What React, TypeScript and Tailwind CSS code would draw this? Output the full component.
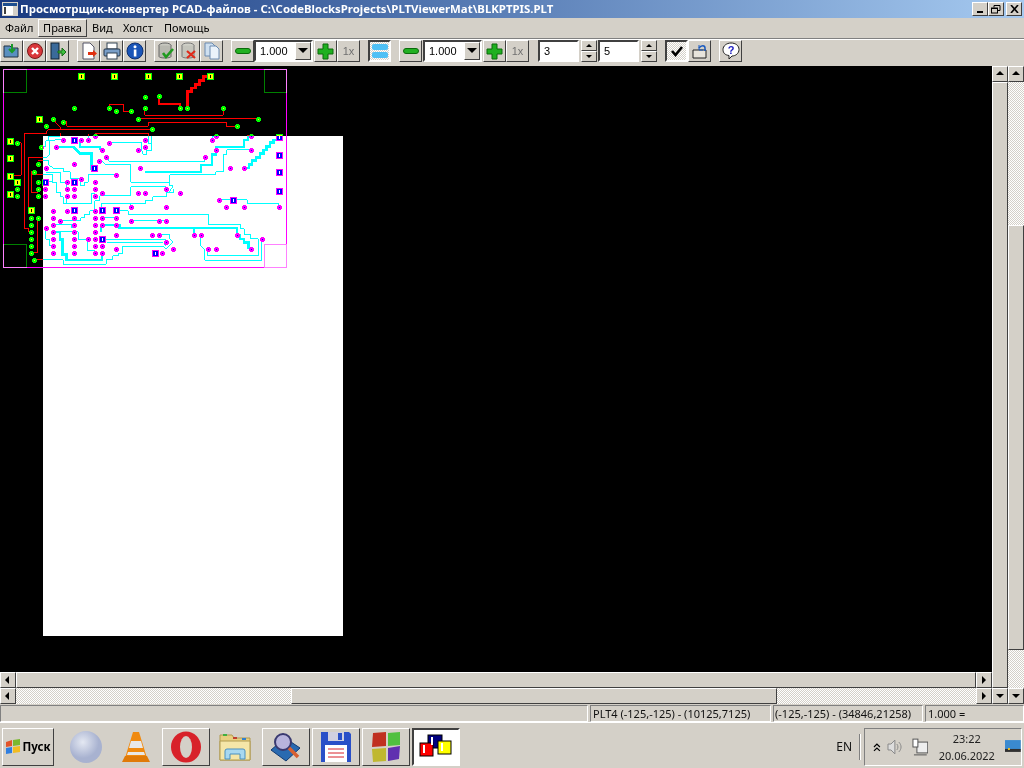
import type { ReactNode } from 'react'

const raised = 'border border-t-white border-l-white border-r-[#404040] border-b-[#404040]'
const sunken = 'border border-t-[#808080] border-l-[#808080] border-r-white border-b-white'
const deep = 'border-2 border-t-[#404040] border-l-[#404040] border-r-white border-b-white'
const dither = 'bg-[conic-gradient(#ffffff_25%,#d4d0c8_0_50%,#ffffff_0_75%,#d4d0c8_0)] bg-[length:2px_2px]'
const digits = "font-['Liberation_Sans',sans-serif]"

// pcb coordinates are 3x screen px, measured from the board's top left zoom
const thin = [
  'M328 126V115H370V136H393', 'M435 126V148H670V126', 'M414 159H774',
  'M159 159H168V171L181 183V190', 'M189 168H201V181H445V169H679V181H711', 'M456 190H147L141 196V202H73V487H87V497H93',
  'M285 202H445V232H456V210', 'M51 231H64V328H33', 'M85 434V274H141L148 265V225H159L165 222H189', 'M95 434H85',
  'M104 318H94V381H114', 'M114 456V561H93', 'M181 202V211H147V225H138V242H125', 'M265 204V226',
  'M327 231H425V253L430 266H440V253H456V210', 'M318 273L330 287H615V272', 'M297 284H305L318 297H393V349H510V360H520L510 375V381H498',
  'M114 285H147V297L160 307H190V318H211V339H243', 'M138 319H183V350H201V369', 'M96 327H159V350H170V380H183V393H190V412H201',
  'M201 390V412H276V382H285', 'M243 339V360H255V349H265V327H348', 'M138 348H159', 'M285 435V404H300V390H393V362H498V369',
  'M306 435V412H393', 'M393 423V412H438V403H458V392H500V381H520V369', 'M180 465H243V456H255V445H270V435H285',
  'M159 477H215V486H225', 'M306 456H348', 'M306 477H348', 'M222 498H235V520H262V555H285V561', 'M138 486V520H150V540H165',
  'M159 498H222', 'M307 520H498', 'M320 530H490L498 540', 'M477 507H510V520L520 528L498 550L490 541H369V562H357V570H339V582H319V595H190V582H104',
  'M510 349V327H648V318H670V265H680V252H753', 'M637 222V213H648', 'M657 402H742V412H837V423',
  'M350 434H385V445H625V477H723V488H733V507H753V519H775V570H624V549', 'M393 465H498', 'M603 507V541L615 553V583H786V519',
]
const thick = [
  'M628 31H610V44H598V56H586V66H574V76H562V125', 'M477 92V114H540V125', 'M168 243H220L240 262H274V308H283',
  'M240 222V243H300V252', 'M435 318H603V297H636V265H648V243H732V222H744V210H753',
  'M738 306H747V295H756V284H768V274H780V262H790V252H800V241H810V230H820V222H838',
  'M303 498V477H358V486H711V507H720V519H732V530H745V549', 'M582 486V507', 'M159 498H180V520H187V565H199V582H306V561',
]
const vias = [
  [222,126],[327,126],[348,135],[393,135],[435,93],[477,92],[435,126],[540,126],[561,126],[669,126],[414,159],[774,159],
  [159,159],[189,168],[138,180],[456,189],[711,181],[51,231],[51,369],[51,390],[114,294],[104,318],[114,348],[114,369],
  [114,390],[93,456],[114,456],[93,477],[93,498],[93,519],[93,540],[93,561],[104,582],[285,210],[189,222],[243,222],
  [265,222],[435,222],[327,231],[435,243],[125,243],[168,243],[306,252],[414,252],[318,273],[297,285],[222,294],[138,306],
  [420,306],[348,327],[243,339],[201,348],[285,348],[135,369],[201,369],[222,369],[285,369],[135,390],[201,390],[222,390],
  [285,390],[306,381],[414,381],[435,381],[498,369],[540,381],[393,423],[498,423],[159,435],[201,435],[285,435],[159,456],
  [222,456],[285,456],[306,456],[348,456],[180,465],[393,465],[477,465],[498,465],[159,477],[222,477],[285,477],[306,477],
  [348,477],[138,486],[159,498],[222,498],[285,498],[348,507],[456,507],[477,507],[159,519],[222,519],[264,519],[285,519],
  [498,528],[159,540],[222,540],[285,540],[306,540],[348,549],[519,549],[159,561],[222,561],[285,561],[306,561],[486,561],
  [582,507],[603,507],[711,507],[786,519],[624,549],[648,549],[753,549],[657,402],[678,423],[732,423],[837,423],[690,306],
  [732,306],[615,273],[648,252],[753,252],[636,222],[648,210],[753,210],
]
const pads = [
  [244,31],[342,31],[444,31],[538,31],[631,31],[117,159],[31,225],[31,277],[31,331],[52,349],[31,384],[95,434],
  [223,223],[283,307],[136,349],[223,349],[223,434],[307,434],[350,434],[307,520],[466,562],[700,403],[838,214],[838,268],[838,319],[838,376],
]

const snap = (v: number) => Math.round(v / 3) * 3

function Board() {
  return (
    <svg width="992" height="606" viewBox="0 0 992 606" className="block" shapeRendering="crispEdges">
      <rect x="43" y="70" width="300" height="500" fill="#fff" />
      <g transform="scale(0.33333)">
        <path d="M10 605V10H860V535" fill="none" stroke="#ff00ff" strokeWidth="3" />
        <path d="M10 605H793" fill="none" stroke="#ff00ff" strokeWidth="3" />
        <g className="mix-blend-difference">
          <g fill="none" stroke="#008000" strokeWidth="3">
            <rect x="10" y="10" width="70" height="70" />
            <rect x="793" y="10" width="67" height="70" />
            <rect x="10" y="535" width="70" height="70" />
          </g>
          <g fill="none" stroke="#ff0000" strokeWidth="3">
            {thin.map((d) => <path key={d} d={d} />)}
          </g>
          <g fill="none" stroke="#ff0000" strokeWidth="8">
            {thick.map((d) => <path key={d} d={d} />)}
          </g>
          {vias.map(([x, y]) => {
            const cx = snap(x - 1.5)
            const cy = snap(y - 1.5)
            return (
              <g key={`${x}-${y}`}>
                <rect x={cx - 6} y={cy - 3} width="15" height="9" fill="#00ff00" />
                <rect x={cx - 3} y={cy - 6} width="9" height="15" fill="#00ff00" />
                <rect x={cx} y={cy} width="3" height="3" fill="#ffff00" />
              </g>
            )
          })}
          {pads.map(([x, y]) => {
            const px = snap(x - 10.5)
            const py = snap(y - 10.5)
            return (
              <g key={`${x}-${y}`}>
                <rect x={px} y={py} width="21" height="21" fill="#00ff00" />
                <rect x={px + 3} y={py + 3} width="15" height="15" fill="#ffff00" />
                <rect x={px + 9} y={py + 6} width="3" height="9" fill="#000000" />
              </g>
            )
          })}
        </g>
        <rect x="793" y="535" width="67" height="70" fill="none" stroke="#ff80ff" strokeWidth="3" />
      </g>
    </svg>
  )
}

function Btn({ children, className = '', on = false }: { children?: ReactNode; className?: string; on?: boolean }) {
  return (
    <div className={`flex h-[22px] w-[23px] shrink-0 items-center justify-center ${on ? `${deep} ${dither}` : raised} ${className}`}>
      {children}
    </div>
  )
}

function Ico({ children }: { children: ReactNode }) {
  return <svg width="18" height="18" viewBox="0 0 18 18">{children}</svg>
}

function Tri({ dir }: { dir: 'up' | 'down' | 'left' | 'right' }) {
  const pts = { up: '1,6 5,2 9,6', down: '1,3 9,3 5,7', left: '6,1 6,9 2,5', right: '3,1 3,9 7,5' }[dir]
  return <svg width="10" height="10" viewBox="0 0 10 10"><polygon points={pts} fill="#000" /></svg>
}

function Arrow({ dir, className = '' }: { dir: 'up' | 'down' | 'left' | 'right'; className?: string }) {
  return (
    <div className={`flex h-4 w-4 shrink-0 items-center justify-center bg-[#d4d0c8] ${raised} ${className}`}>
      <Tri dir={dir} />
    </div>
  )
}

function Minus() {
  return <Btn><div className="h-[6px] w-[16px] rounded-[3px] border border-[#0a6a0a] bg-[#22b022]" /></Btn>
}

function Plus() {
  return (
    <Btn>
      <svg width="17" height="17" viewBox="0 0 17 17">
        <path d="M6 1h5v5h5v5h-5v5H6v-5H1V6h5z" fill="#1fb01f" stroke="#0a6a0a" />
      </svg>
    </Btn>
  )
}

function OneX() {
  return <Btn className={`text-[11px] text-[#707070] ${digits}`}>1x</Btn>
}

function Combo() {
  return (
    <div className={`flex h-[22px] w-[59px] shrink-0 items-center bg-white pl-[4px] text-[11px] text-black ${deep} ${digits}`}>
      <span className="flex-1">1.000</span>
      <div className={`flex h-[18px] w-[16px] items-center justify-center bg-[#d4d0c8] ${raised}`}>
        <svg width="10" height="6" viewBox="0 0 10 6"><polygon points="0,0 10,0 5,5" fill="#000" /></svg>
      </div>
    </div>
  )
}

function Spin({ value, width }: { value: string; width: string }) {
  return (
    <>
      <div className={`flex h-[22px] shrink-0 items-center bg-white pl-[4px] text-[11px] text-black ${width} ${deep} ${digits}`}>{value}</div>
      <div className="ml-[2px] flex h-[22px] w-[16px] shrink-0 flex-col">
        <div className={`flex h-[11px] items-center justify-center ${raised}`}>
          <svg width="6" height="4" viewBox="0 0 6 4"><polygon points="0,3 6,3 3,0" fill="#000" /></svg>
        </div>
        <div className={`flex h-[11px] items-center justify-center ${raised}`}>
          <svg width="6" height="4" viewBox="0 0 6 4"><polygon points="0,0 6,0 3,3" fill="#000" /></svg>
        </div>
      </div>
    </>
  )
}

function TaskIcon({ children, boxed = false, className = '' }: { children: ReactNode; boxed?: boolean; className?: string }) {
  return (
    <div className={`flex h-[38px] w-[48px] shrink-0 items-center justify-center ${boxed ? raised : ''} ${className}`}>
      {children}
    </div>
  )
}

export default function App() {
  return (
    <div className="flex h-[768px] w-[1024px] flex-col overflow-hidden bg-[#d4d0c8] font-['Noto_Sans',sans-serif] text-black">
      <div className="flex h-[18px] shrink-0 items-center bg-gradient-to-r from-[#1a3a80] to-[#a6caf0] pl-[2px] pr-[2px]">
        <svg width="16" height="14" viewBox="0 0 16 14">
          <rect width="16" height="14" fill="#d4d0c8" />
          <rect x="1" y="1" width="14" height="3" fill="#1f4f8f" />
          <rect x="1" y="4" width="10" height="9" fill="#fff" />
          <rect x="2" y="5" width="2" height="7" fill="#404040" />
        </svg>
        <span className="ml-[2px] flex-1 whitespace-nowrap text-[11.4px] leading-none font-bold text-white">
          Просмотрщик-конвертер PCAD-файлов - C:\CodeBlocksProjects\PLTViewerMat\BLKPTPIS.PLT
        </span>
        <div className={`flex h-[14px] w-4 items-end justify-center bg-[#d4d0c8] pb-[2px] ${raised}`}>
          <div className="h-[2px] w-[6px] bg-black" />
        </div>
        <div className={`flex h-[14px] w-4 items-center justify-center bg-[#d4d0c8] ${raised}`}>
          <svg width="10" height="9" viewBox="0 0 10 9" fill="none" stroke="#000">
            <path d="M3 2.5V.5h6v5H7" /><rect x=".5" y="3" width="6" height="5" /><path d="M1 3.5h5" />
          </svg>
        </div>
        <div className={`ml-[2px] flex h-[14px] w-4 items-center justify-center bg-[#d4d0c8] ${raised}`}>
          <svg width="9" height="8" viewBox="0 0 9 8" stroke="#000" strokeWidth="1.6"><path d="M1 0l7 8M8 0L1 8" /></svg>
        </div>
      </div>

      <div className="flex h-[20px] shrink-0 items-center pl-[5px] text-[11px]">
        <span className="w-[27px]">Файл</span>
        <span className={`ml-[6px] flex h-[18px] w-[49px] items-center justify-center ${raised}`}>Правка</span>
        <span className="ml-[5px] w-[19px]">Вид</span>
        <span className="ml-[12px] w-[29px]">Холст</span>
        <span className="ml-[12px]">Помощь</span>
      </div>

      <div className="flex h-[28px] shrink-0 items-start border-t border-t-[#808080] pt-[1px] shadow-[inset_0_1px_0_#ffffff]">
        <Btn><Ico><path d="M1 4h6l2 2h6v9H1z" fill="#5a8fc0" stroke="#234" /><path d="M9 2v7M6 7l3 3 3-3" stroke="#1a9a2a" strokeWidth="2" fill="none" /></Ico></Btn>
        <Btn><Ico><circle cx="9" cy="9" r="7.5" fill="#d9363a" stroke="#7a1a1a" /><path d="M6 6l6 6M12 6l-6 6" stroke="#fff" strokeWidth="2.4" /></Ico></Btn>
        <Btn><Ico><rect x="2" y="1" width="8" height="16" fill="#3a6a9a" stroke="#123" /><path d="M9 9h4V6l4 4-4 4v-3H9z" fill="#3fc03f" stroke="#176a17" /></Ico></Btn>
        <Btn className="ml-[8px]"><Ico><path d="M3 1h7l4 4v12H3z" fill="#fff" stroke="#556" /><path d="M8 10h5V8l4 3.5-4 3.5v-2H8z" fill="#e03010" /></Ico></Btn>
        <Btn><Ico><rect x="4" y="1" width="10" height="6" fill="#fff" stroke="#345" /><rect x="1" y="7" width="16" height="7" rx="1" fill="#7a9fc8" stroke="#234" /><rect x="4" y="11" width="10" height="6" fill="#fff" stroke="#345" /></Ico></Btn>
        <Btn><Ico><circle cx="9" cy="9" r="8" fill="#1a55b8" stroke="#0d2f70" /><rect x="7.8" y="7.5" width="2.6" height="7" fill="#fff" /><circle cx="9" cy="4.8" r="1.5" fill="#fff" /></Ico></Btn>
        <Btn className="ml-[8px]"><Ico><ellipse cx="8" cy="3.5" rx="6" ry="2.5" fill="#c8c8c0" stroke="#666" /><path d="M2 3.5v11c0 2 12 2 12 0v-11" fill="#b8b8b0" stroke="#666" /><path d="M6 11l3 4 7-8" stroke="#1f9a1f" strokeWidth="2.6" fill="none" /></Ico></Btn>
        <Btn><Ico><ellipse cx="8" cy="3.5" rx="6" ry="2.5" fill="#d0d0c8" stroke="#777" /><path d="M2 3.5v11c0 2 12 2 12 0v-11" fill="#c4c4bc" stroke="#777" /><path d="M7 9l8 7M15 9l-8 7" stroke="#e02a1a" strokeWidth="2.2" /></Ico></Btn>
        <Btn><Ico><path d="M2 1h7l3 3v10H2z" fill="#cfe0f0" stroke="#6a8ab0" /><path d="M7 4h6l3 3v10H7z" fill="#eaf2fa" stroke="#6a8ab0" /></Ico></Btn>
        <div className="ml-[8px]"><Minus /></div>
        <Combo />
        <div className="ml-[1px]"><Plus /></div>
        <OneX />
        <Btn on className="ml-[8px]">
          <svg width="16" height="16" viewBox="0 0 16 16">
            <rect x="0" y="1" width="16" height="6" rx="2" fill="#4fc0f5" />
            <rect x="0" y="9" width="16" height="6" rx="2" fill="#4fc0f5" />
          </svg>
        </Btn>
        <div className="ml-[8px]"><Minus /></div>
        <div className="ml-[1px]"><Combo /></div>
        <div className="ml-[1px]"><Plus /></div>
        <OneX />
        <div className="ml-[9px] flex items-start"><Spin value="3" width="w-[41px]" /></div>
        <div className="ml-[1px] flex items-start"><Spin value="5" width="w-[41px]" /></div>
        <Btn on className="ml-[8px]">
          <svg width="14" height="12" viewBox="0 0 14 12"><path d="M2 6l3.5 4L12 2" stroke="#000" strokeWidth="2.6" fill="none" /></svg>
        </Btn>
        <Btn>
          <Ico>
            <path d="M2 8h13v8H2z" fill="#e8e4dc" stroke="#222" />
            <path d="M8 6c2-3 6-3 6 0v3" fill="none" stroke="#1a5ac0" strokeWidth="1.5" />
            <path d="M8 3v5h4" fill="none" stroke="#1a5ac0" strokeWidth="1" />
          </Ico>
        </Btn>
        <Btn className="ml-[8px]">
          <Ico>
            <path d="M9 1c4.500 0 8 2.500 8 6.500S13.500 14 10 14l-3 3v-3.500C3 13 1 11 1 7.500S4.500 1 9 1z" fill="#fff" stroke="#222" />
            <text x="9" y="12" textAnchor="middle" fontSize="11" fontWeight="bold" fill="#1a1ac0" fontFamily="'Liberation Sans', sans-serif">?</text>
          </Ico>
        </Btn>
      </div>

      <div className="flex h-[638px] shrink-0">
        <div className="flex w-[992px] flex-col">
          <div className="h-[606px] bg-black"><Board /></div>
          <div className="flex h-4">
            <Arrow dir="left" />
            <div className={`flex-1 bg-[#d4d0c8] ${raised}`} />
            <Arrow dir="right" />
          </div>
          <div className="flex h-4">
            <Arrow dir="left" />
            <div className={`w-[275px] ${dither}`} />
            <div className={`w-[486px] bg-[#d4d0c8] ${raised}`} />
            <div className={`flex-1 ${dither}`} />
            <Arrow dir="right" />
          </div>
        </div>
        <div className="flex w-4 flex-col">
          <Arrow dir="up" />
          <div className={`flex-1 bg-[#d4d0c8] ${raised}`} />
          <Arrow dir="down" />
        </div>
        <div className="flex w-4 flex-col">
          <Arrow dir="up" />
          <div className={`h-[143px] ${dither}`} />
          <div className={`h-[425px] bg-[#d4d0c8] ${raised}`} />
          <div className={`flex-1 ${dither}`} />
          <Arrow dir="down" />
        </div>
      </div>

      <div className="flex h-[19px] shrink-0 gap-[2px] border-b border-b-white pt-[1px] text-[11px] leading-none text-[#111]">
        <div className={`w-[588px] ${sunken}`} />
        <div className={`flex w-[181px] items-center whitespace-nowrap pl-[2px] ${sunken}`}>PLT4 (-125,-125) - (10125,7125)</div>
        <div className={`flex w-[150px] items-center whitespace-nowrap pl-[1px] ${sunken}`}>(-125,-125) - (34846,21258)</div>
        <div className={`flex flex-1 items-center pl-[2px] ${sunken}`}>1.000 =</div>
      </div>

      <div className="flex h-[45px] shrink-0 items-center gap-[2px] pl-[2px] pr-[2px] pt-[2px]">
        <div className={`flex h-[38px] w-[52px] shrink-0 items-center justify-center gap-[1px] ${raised}`}>
          <svg width="16" height="15" viewBox="0 0 16 15">
            <path d="M1 3l6-2v6l-6 1z" fill="#e2542a" /><path d="M8 1l7-1v6l-7 1z" fill="#7ab82e" />
            <path d="M1 9l6-1v6l-6 1z" fill="#2f7ee0" /><path d="M8 8l7-1v6l-7 1z" fill="#f2bc20" />
          </svg>
          <span className="text-[11.500px] leading-none font-bold">Пуск</span>
        </div>
        <TaskIcon className="ml-[6px]">
          <svg width="34" height="34" viewBox="0 0 34 34">
            <defs><radialGradient id="glb" cx="40%" cy="35%"><stop offset="0" stopColor="#e4e8f2" /><stop offset="1" stopColor="#a8b2d0" /></radialGradient></defs>
            <circle cx="17" cy="17" r="16" fill="url(#glb)" />
          </svg>
        </TaskIcon>
        <TaskIcon>
          <svg width="28" height="32" viewBox="0 0 28 32">
            <path d="M11 1h6l8 26H3z" fill="#f08a10" /><path d="M9 10h10l2 7H7z" fill="#e8e8e8" /><path d="M6 21h16l1 3H5z" fill="#e8e8e8" />
            <path d="M3 25h22l3 6H0z" fill="#e07a08" />
          </svg>
        </TaskIcon>
        <TaskIcon boxed>
          <svg width="32" height="32" viewBox="0 0 32 32">
            <ellipse cx="16" cy="16" rx="15" ry="15.500" fill="#d8222a" />
            <ellipse cx="16" cy="16" rx="6" ry="11" fill="#d4d0c8" />
          </svg>
        </TaskIcon>
        <TaskIcon>
          <svg width="34" height="30" viewBox="0 0 34 30">
            <path d="M1 3h12l2 3h16v22H1z" fill="#e8cf80" stroke="#b09a50" />
            <rect x="4" y="2" width="4" height="2" fill="#40b040" /><rect x="14" y="5" width="4" height="2" fill="#c04030" /><rect x="23" y="6" width="4" height="2" fill="#3080d0" />
            <path d="M1 9h30v19H1z" fill="#f5e6a8" stroke="#b09a50" />
            <path d="M6 27v-8a2 2 0 0 1 2-2h16a2 2 0 0 1 2 2v8h-5v-5H11v5z" fill="#a8d8f0" stroke="#4a90c0" />
          </svg>
        </TaskIcon>
        <TaskIcon boxed>
          <svg width="32" height="32" viewBox="0 0 32 32">
            <path d="M1 19L15 7l15 10-14 13z" fill="#2a6ab0" stroke="#123a70" />
            <circle cx="13" cy="11" r="8" fill="#b8b4dc" stroke="#3a3a70" strokeWidth="2" />
            <path d="M19 17l9 9" stroke="#d86030" strokeWidth="3.500" />
          </svg>
        </TaskIcon>
        <TaskIcon boxed>
          <svg width="32" height="32" viewBox="0 0 32 32">
            <path d="M1 1h28l2 2v28H1z" fill="#2a50c8" />
            <rect x="8" y="1" width="16" height="9" fill="#d0d0e0" /><rect x="18" y="2" width="4" height="7" fill="#2a50c8" />
            <rect x="5" y="14" width="22" height="17" fill="#fff" />
            <path d="M8 18h16M8 22h16M8 26h16" stroke="#d8222a" />
          </svg>
        </TaskIcon>
        <TaskIcon boxed>
          <svg width="32" height="32" viewBox="0 0 32 32">
            <path d="M3 2l13-1v14L2 16z" fill="#c03020" /><path d="M18 2l12-1v13l-12 1z" fill="#50c040" />
            <path d="M2 18l14-1 0 13-13 1z" fill="#c0b830" /><path d="M18 17l12-2-1 13-11 2z" fill="#6030b0" />
          </svg>
        </TaskIcon>
        <TaskIcon className={`bg-white ${deep}`}>
          <svg width="34" height="26" viewBox="0 0 34 26">
            <rect x="9" y="1" width="14" height="13" fill="#000080" stroke="#000" />
            <rect x="1" y="9" width="13" height="13" fill="#ff0000" stroke="#000" />
            <rect x="19" y="7" width="13" height="13" fill="#ffff00" stroke="#000" />
            <rect x="4" y="11" width="2" height="8" fill="#fff" /><rect x="12" y="3" width="2" height="8" fill="#fff" /><rect x="22" y="9" width="2" height="8" fill="#fff" />
          </svg>
        </TaskIcon>
        <span className="ml-auto mr-[5px] text-[12px] leading-none text-[#111]">EN</span>
        <div className="mr-[1px] h-[26px] w-[2px] border-l border-l-[#808080] border-r border-r-white" />
        <div className={`flex h-[38px] w-[158px] shrink-0 items-center ${sunken} pl-[7px]`}>
          <svg width="10" height="10" viewBox="0 0 10 10" fill="none" stroke="#000" strokeWidth="1.200"><path d="M2 5l3-3 3 3M2 9l3-3 3 3" /></svg>
          <svg className="ml-[5px]" width="16" height="16" viewBox="0 0 16 16" fill="none" stroke="#888"><path d="M1 5h3l4-4v14l-4-4H1z" fill="#ddd" /><path d="M10 5c1.500 2 1.500 4 0 6M12 3c3 3 3 7 0 10" /></svg>
          <svg className="ml-[8px]" width="18" height="18" viewBox="0 0 18 18" fill="none" stroke="#555"><rect x="6" y="4" width="11" height="11" fill="#eee" /><rect x="2" y="1" width="5" height="8" fill="#fff" /><path d="M3 17h13" /></svg>
          <div className="flex w-[78px] flex-col items-center text-[11px] leading-[17px] text-[#222]">
            <span>23:22</span>
            <span>20.06.2022</span>
          </div>
          <svg width="16" height="13" viewBox="0 0 16 13"><rect width="16" height="10" fill="#3a8ad0" /><rect y="9" width="16" height="3" fill="#303030" /><rect x="3" y="8" width="2" height="2" fill="#f0c020" /></svg>
        </div>
      </div>
    </div>
  )
}
